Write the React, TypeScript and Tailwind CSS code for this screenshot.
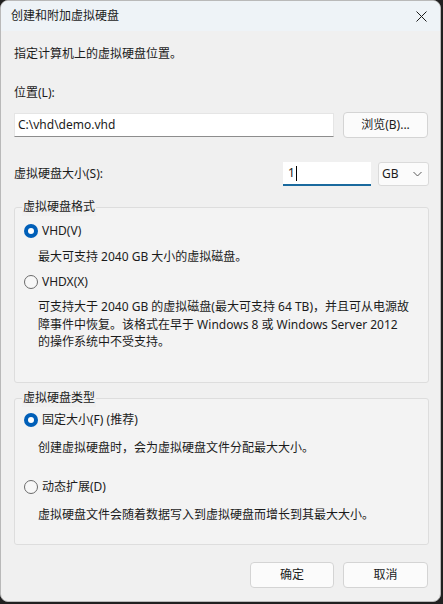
import React from "react";

function Radio({ checked }: { checked: boolean }) {
  return checked ? (
    <span className="flex h-[14px] w-[14px] shrink-0 items-center justify-center rounded-full bg-[#005fb8]">
      <span className="h-[6px] w-[6px] rounded-full bg-white" />
    </span>
  ) : (
    <span className="h-[14px] w-[14px] shrink-0 rounded-full border border-[#6b6b6b] bg-[#f7f7f7]" />
  );
}

function Group({ title, children, className }: { title: string; children: React.ReactNode; className: string }) {
  return (
    <div className={`relative rounded-[3px] border border-[#dddddd] bg-[#f3f3f3] pl-[9px] pr-[10px] ${className}`}>
      <span className="absolute left-[7px] top-[-10px] bg-[#f0f0f0] px-px leading-[18px]">{title}</span>
      {children}
    </div>
  );
}

export default function App() {
  return (
    <div className="h-[604px] w-[443px] bg-[#202020] font-['Noto_Sans','Noto_Sans_CJK_SC',sans-serif] text-[12px] text-[#1b1b1b]">
      <div className="flex h-[602px] w-[441px] flex-col overflow-hidden rounded-[8px] border border-[#b9b9b9] bg-[#f0f0f0]">
        <div className="flex h-[30px] shrink-0 items-center justify-between bg-[#eef3f7] pl-[10px] pr-[9px]">
          <span className="leading-[18px]">创建和附加虚拟硬盘</span>
          <svg width="11" height="11" viewBox="0 0 11 11" className="mr-[4px]">
            <path d="M0.5 0.5 L10.5 10.5 M10.5 0.5 L0.5 10.5" stroke="#1b1b1b" strokeWidth="1" />
          </svg>
        </div>
        <div className="flex flex-col pl-[13px] pr-[11px]">
          <div className="mt-[14px] leading-[18px]">指定计算机上的虚拟硬盘位置。</div>
          <div className="mt-[21px] leading-[18px]">位置(L):</div>
          <div className="mt-[10px] flex h-[26px] items-center gap-[9px] pr-px">
            <div className="flex h-[24px] w-[320px] items-center border border-[#e5e5e5] border-b-[#8d8d8d] bg-white pl-[3px]">
              C:\vhd\demo.vhd
            </div>
            <div className="flex h-[26px] w-[85px] items-center justify-center rounded-[4px] border border-[#d4d4d4] bg-[#fbfbfb]">
              浏览(B)...
            </div>
          </div>
          <div className="mt-[24px] flex h-[24px] items-center">
            <span className="flex-1 leading-[18px]">虚拟硬盘大小(S):</span>
            <div className="flex h-[24px] w-[88px] items-center border-b-2 border-[#1a6a9e] bg-white pl-[5px]">
              <span>1</span>
              <span className="ml-px h-[15px] w-px bg-black" />
            </div>
            <div className="ml-[7px] flex h-[24px] w-[51px] items-center justify-between rounded-[3px] border border-[#dadada] bg-[#fbfbfb] pl-[3px] pr-[6px]">
              <span>GB</span>
              <svg width="9" height="6" viewBox="0 0 9 6">
                <path d="M0.5 1 L4.5 5 L8.5 1" fill="none" stroke="#5a5a5a" strokeWidth="1" />
              </svg>
            </div>
          </div>

          <Group title="虚拟硬盘格式" className="mt-[21px] h-[176px] pt-[14px]">
            <div className="flex h-[18px] items-center gap-[4px]">
              <Radio checked />
              <span className="leading-[18px]">VHD(V)</span>
            </div>
            <div className="mt-[8px] pl-[14px] leading-[18px]">最大可支持 2040 GB 大小的虚拟磁盘。</div>
            <div className="mt-[7px] flex h-[18px] items-center gap-[4px]">
              <Radio checked={false} />
              <span className="leading-[18px]">VHDX(X)</span>
            </div>
            <div className="mt-[7px] whitespace-nowrap pl-[14px] leading-[17.5px]">
              可支持大于 2040 GB 的虚拟磁盘(最大可支持 64 TB)，并且可从电源故
              <br />
              障事件中恢复。该格式在早于 Windows 8 或 Windows Server 2012
              <br />
              的操作系统中不受支持。
            </div>
          </Group>

          <Group title="虚拟硬盘类型" className="mt-[15px] h-[147px] pt-[12px]">
            <div className="flex h-[18px] items-center gap-[4px]">
              <Radio checked />
              <span className="leading-[18px]">固定大小(F) (推荐)</span>
            </div>
            <div className="mt-[10px] pl-[14px] leading-[18px]">创建虚拟硬盘时，会为虚拟硬盘文件分配最大大小。</div>
            <div className="mt-[21px] flex h-[18px] items-center gap-[4px]">
              <Radio checked={false} />
              <span className="leading-[18px]">动态扩展(D)</span>
            </div>
            <div className="mt-[10px] pl-[14px] leading-[18px]">虚拟硬盘文件会随着数据写入到虚拟硬盘而增长到其最大大小。</div>
          </Group>

          <div className="mt-[17px] flex justify-end gap-[9px] pr-px">
            <div className="flex h-[26px] w-[84px] items-center justify-center rounded-[4px] border border-[#d4d4d4] bg-[#fbfbfb]">
              确定
            </div>
            <div className="flex h-[26px] w-[85px] items-center justify-center rounded-[4px] border border-[#d4d4d4] bg-[#fbfbfb]">
              取消
            </div>
          </div>
        </div>
      </div>
    </div>
  );
}
